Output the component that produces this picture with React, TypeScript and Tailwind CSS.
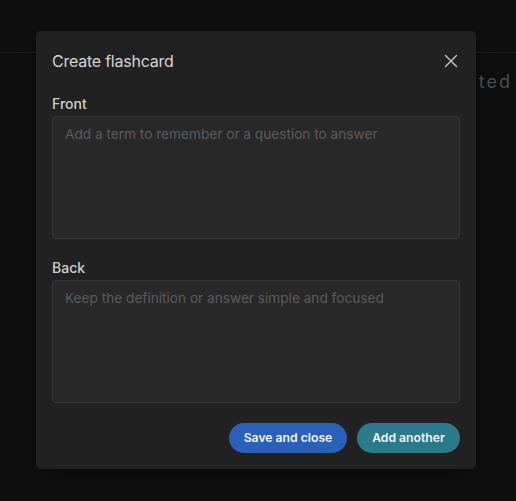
import React from "react";

export default function App() {
  return (
    <div
      className="relative w-[516px] h-[501px] overflow-hidden bg-[#0e0e0e]"
      style={{ fontFamily: "Inter, 'Noto Sans', sans-serif" }}
    >
      <div className="h-[53px] border-b border-[#1c1c1c]" />
      <div className="flex justify-end pr-[4px] pt-[15px]">
        <span className="text-[18px] tracking-[0.11em] text-[#4c4c4c]">Nothing selected</span>
      </div>

      <div className="absolute left-[36px] top-[31px] w-[440px] rounded-[5px] bg-[#212121] px-4 pt-[18px] pb-4 shadow-xl">
        <div className="flex items-center justify-between h-6">
          <h2 className="text-[16px] font-normal tracking-[-0.015em] text-[#d4d4d4]">Create flashcard</h2>
          <button className="mr-[2px] text-[#bdbdbd]">
            <svg width="14" height="14" viewBox="0 0 14 14" fill="none">
              <path d="M1.5 1.5 L12.5 12.5 M12.5 1.5 L1.5 12.5" stroke="currentColor" strokeWidth="1.5" strokeLinecap="round" />
            </svg>
          </button>
        </div>

        <div className="mt-[21px] flex flex-col gap-[2px]">
          <label className="text-[14px] leading-5 font-medium text-[#cfcfcf]">Front</label>
          <textarea
            className="h-[123px] w-full resize-none rounded-[4px] border border-[#373737] bg-[#282828] px-3 py-[7px] text-[13.65px] leading-5 text-[#ddd] placeholder:text-[#5c5c5c] outline-none"
            placeholder="Add a term to remember or a question to answer"
          />
        </div>

        <div className="mt-[19px] flex flex-col gap-[2px]">
          <label className="text-[14px] leading-5 font-medium text-[#cfcfcf]">Back</label>
          <textarea
            className="h-[123px] w-full resize-none rounded-[4px] border border-[#373737] bg-[#282828] px-3 py-[7px] text-[13.65px] leading-5 text-[#ddd] placeholder:text-[#5c5c5c] outline-none"
            placeholder="Keep the definition or answer simple and focused"
          />
        </div>

        <div className="mt-5 flex justify-end gap-[10px]">
          <button className="h-[30px] w-[118px] rounded-full bg-[#2b60b8] text-[12.2px] font-semibold text-[#f2f2f2]">
            Save and close
          </button>
          <button className="h-[30px] w-[103px] rounded-full bg-[#2b7a8b] text-[12.2px] font-semibold text-[#f2f2f2]">
            Add another
          </button>
        </div>
      </div>
    </div>
  );
}
